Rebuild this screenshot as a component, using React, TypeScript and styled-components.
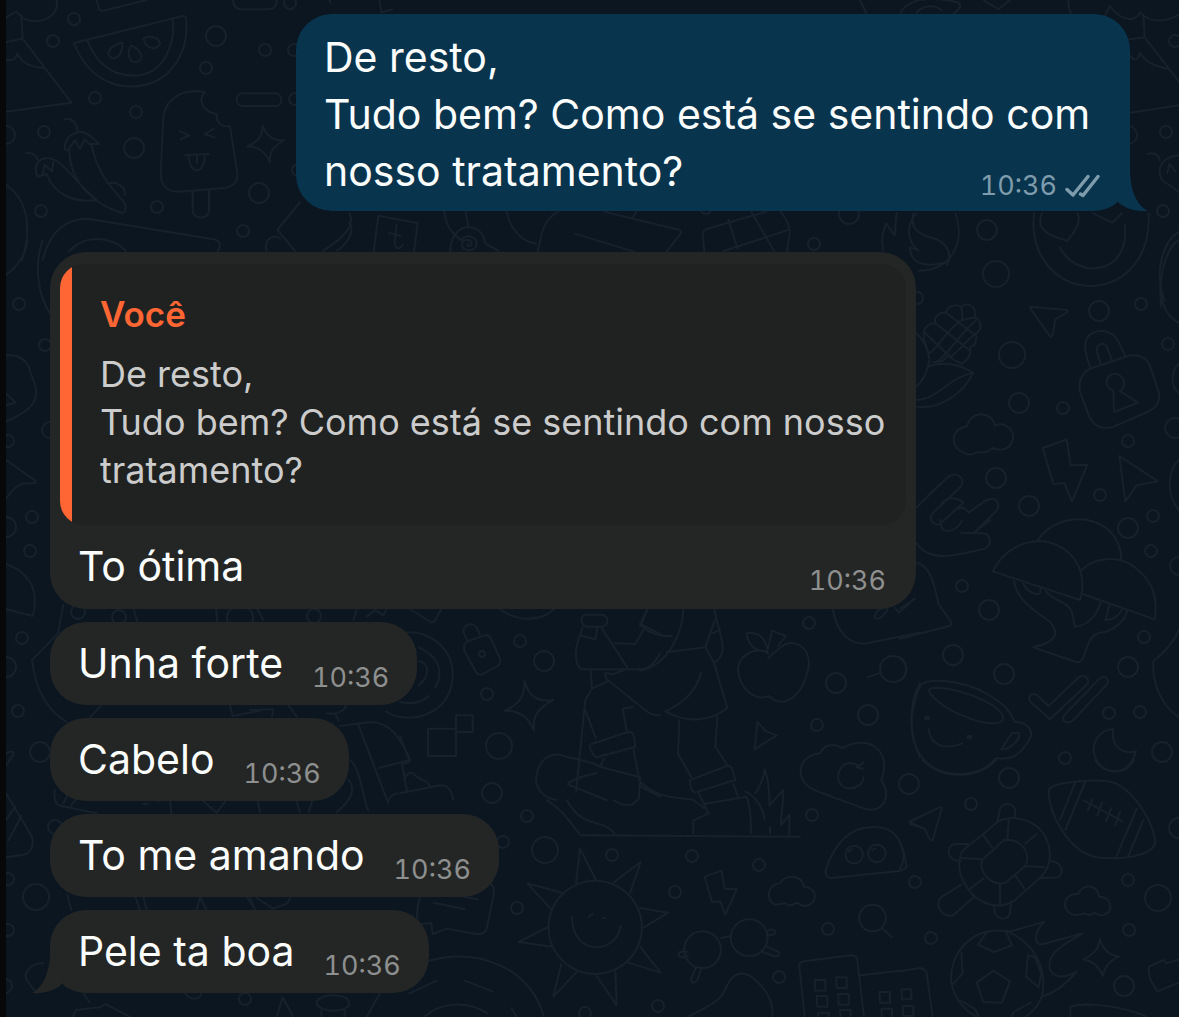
import React from "react";
import styled, { createGlobalStyle } from "styled-components";

const color = {
  night: "#0b1621",
  doodle: "#16212c",
  edge: "#080808",
  sent: "#09344d",
  received: "#242625",
  quote: "#202221",
  accent: "#ff6633",
  text: "#fbfdfd",
  quoteText: "#cbcccb",
};

const GlobalStyle = createGlobalStyle`
  body {
    margin: 0;
    background: ${color.night};
    font-family: Inter, "Liberation Sans", sans-serif;
    color: ${color.text};
  }
`;

const Chat = styled.main`
  position: relative;
  box-sizing: border-box;
  min-height: 100vh;
  overflow: hidden;
  padding: 14px 49px 24px 44px;
  border-left: 6px solid ${color.edge};
  background: ${color.night};
`;

const Wallpaper = styled.svg`
  position: absolute;
  top: 0;
  left: -6px;
  fill: none;
  stroke: ${color.doodle};
  stroke-width: 2px;
  stroke-linecap: round;
  stroke-linejoin: round;

  path {
    vector-effect: non-scaling-stroke;
  }
`;

const Thread = styled.ol`
  position: relative;
  display: flex;
  flex-direction: column;
  gap: 13px;
  margin: 0;
  padding: 0;
  list-style: none;
`;

const Bubble = styled.li<{ $sent?: boolean; $wide?: boolean }>`
  position: relative;
  box-sizing: border-box;
  align-self: ${(p) => (p.$sent ? "flex-end" : "flex-start")};
  width: ${(p) => (p.$sent ? "834px" : p.$wide ? "866px" : "auto")};
  max-width: 100%;
  margin-bottom: ${(p) => (p.$sent ? "28px" : "0")};
  padding: ${(p) => (p.$sent ? "15px 30px 11px 28px" : p.$wide ? "12px 10px 14px" : "13px 28px")};
  border-radius: 36px;
  background: ${(p) => (p.$sent ? color.sent : color.received)};
`;

const Tail = styled.svg<{ $sent?: boolean }>`
  position: absolute;
  bottom: 0;
  ${(p) => (p.$sent ? "right: -18px;" : "left: -18px; transform: scaleX(-1);")}
  fill: ${(p) => (p.$sent ? color.sent : color.received)};
`;

const Line = styled.div<{ $inset?: boolean }>`
  display: flex;
  justify-content: space-between;
  align-items: flex-end;
  gap: 29px;
  padding: ${(p) => (p.$inset ? "0 20px 0 18px" : "0")};
`;

const Text = styled.p`
  margin: 0;
  font-size: 41px;
  line-height: 57px;
  white-space: pre-line;
`;

const Meta = styled.span<{ $sent?: boolean }>`
  display: flex;
  align-items: center;
  gap: 8px;
  font-size: 27px;
  font-variant-numeric: tabular-nums;
  line-height: 28px;
  color: ${(p) => (p.$sent ? "#7f9cac" : "#8e908f")};
`;

const QuoteFrame = styled.div`
  margin-bottom: 13px;
  border-radius: 24px;
  overflow: hidden;
`;

const Quote = styled.blockquote`
  margin: 0;
  padding: 26px 20px 31px 28px;
  border-left: 12px solid ${color.accent};
  background: ${color.quote};
`;

const Author = styled.cite`
  display: block;
  margin-bottom: 12px;
  font-size: 35px;
  font-style: normal;
  font-weight: 600;
  line-height: 48px;
  color: ${color.accent};
`;

const QuoteText = styled.p`
  margin: 0;
  font-size: 36px;
  line-height: 48px;
  color: ${color.quoteText};
  white-space: pre-line;
`;

function BubbleTail({ sent }: { sent?: boolean }) {
  return (
    <Tail $sent={sent} width="34" height="60" viewBox="0 0 34 60" aria-hidden="true">
      <path d="M0 14H16V18C16 38 22 54 34 60C21 61 11 57 5 52L0 40Z" />
    </Tail>
  );
}

function DoubleCheck() {
  return (
    <svg width="35" height="24" viewBox="0 0 35 24" fill="none" stroke="currentColor" strokeWidth="3.400" strokeLinecap="round" role="img" aria-label="Entregue">
      <path d="M2 15.500L8 21L23 2.500" strokeLinejoin="round" />
      <path d="M15.500 20L18 21.500L33 2.500" strokeLinejoin="round" />
    </svg>
  );
}

const dots: [number, number, number][] = [
  [74, 19, 6], [53, 41, 6], [206, 68, 6], [95, 98, 6], [136, 112, 6], [44, 132, 6], [41, 211, 6], [157, 207, 6],
  [243, 231, 6], [265, 50, 6], [290, 3, 6], [216, 36, 10], [134, 148, 10], [259, 193, 10], [6, 135, 9], [294, 50, 6],
  [295, 99, 6], [298, 170, 6], [1175, 41, 6], [1166, 132, 6], [1163, 211, 6], [987, 230, 10], [996, 274, 13],
  [1128, 135, 9], [1099, 311, 10], [1141, 304, 6], [1168, 344, 6], [1012, 355, 13], [1019, 403, 10], [1063, 408, 6],
  [1175, 428, 10], [1128, 441, 6], [996, 478, 10], [1029, 506, 10], [1100, 495, 6], [1153, 516, 6], [1128, 528, 10],
  [917, 298, 6], [1151, 551, 6], [962, 586, 6], [989, 610, 10], [953, 655, 10], [1004, 674, 10], [1144, 637, 6],
  [1128, 667, 10], [1109, 713, 6], [1140, 712, 6], [1065, 758, 6], [1162, 752, 10], [1009, 778, 10], [1179, 566, 9],
  [893, 669, 13], [909, 784, 10], [971, 804, 6], [915, 882, 6], [931, 938, 6], [1128, 880, 6], [1158, 898, 13],
  [1129, 930, 6], [1124, 986, 10], [1179, 828, 10], [520, 641, 6], [544, 661, 10], [487, 694, 6], [499, 746, 13],
  [492, 793, 10], [809, 623, 6], [836, 683, 10], [868, 715, 10], [817, 725, 6], [812, 815, 6], [527, 816, 6],
  [503, 842, 6], [545, 850, 13], [612, 855, 6], [692, 856, 6], [675, 892, 6], [517, 908, 6], [759, 865, 6],
  [828, 929, 6], [779, 977, 6], [658, 1006, 6], [585, 1013, 6], [19, 304, 6], [45, 345, 6], [8, 441, 6],
  [32, 517, 6], [6, 527, 10], [30, 551, 6], [50, 430, 8], [78, 612, 7], [119, 617, 7], [22, 638, 6], [6, 667, 10],
  [18, 711, 6], [40, 752, 10], [8, 879, 6], [36, 897, 13], [8, 930, 6], [5, 986, 7], [245, 999, 6], [55, 827, 7],
  [482, 654, 3], [314, 616, 7], [240, 618, 13], [814, 244, 6], [849, 214, 10], [706, 208, 6],
];

// Each cluster is drawn on a grid three times finer than the page.
const clusters: { x: number; y: number; paths: string[] }[] = [
  {
    x: 0,
    y: 0,
    paths: [
      // watermelon slice and tray
      "M222 129L548 48Q557 46 558 56C568 150 520 232 438 254C340 276 262 230 222 129Z",
      "M262 121C290 192 340 232 416 226C488 218 526 140 519 58",
      "M368 128C352 128 320 148 326 164C336 186 366 176 368 128Z M394 136C380 158 386 186 406 186C434 184 430 154 394 136Z M430 116C448 104 478 112 480 130C474 152 440 150 430 116Z",
      "M290 0L296 24Q300 36 316 31L440 0",
      "M700 0C698 16 708 28 724 28H806C822 28 832 14 830 0 M988 0L992 8 M1138 0L1144 38L1176 28",
      // pizza slice
      "M0 62L50 34Q70 66 110 64C160 56 174 30 170 0 M64 46L68 116L214 308L0 338 M0 130L68 116 M0 164C20 190 50 182 52 160C66 192 100 202 132 204",
      // ice lolly
      "M490 350C500 290 550 266 614 276C592 304 610 336 650 342C648 366 664 384 690 378L712 520C714 548 700 560 670 564L540 575C500 576 482 556 482 520Z",
      "M578 575V632C580 660 626 660 627 630V570",
      "M540 394L568 406L542 418 M642 386L614 402L644 412 M556 465L626 462 M566 466C568 528 614 526 614 464 M591 464V490",
      "M728 280H826C850 282 850 318 826 318H728C704 316 704 282 728 280Z",
      "M788 376C800 410 820 424 852 420C820 440 806 456 810 486C796 456 776 438 742 440C776 424 788 408 788 376Z",
      // chillies
      "M192 358C214 350 234 370 232 398 M194 448C192 402 240 384 268 406L298 432L274 432C290 520 340 570 372 606C382 620 376 642 364 638C300 620 210 560 208 452L194 448Z M208 446L224 420L240 446L254 418L270 434",
      "M78 460C98 456 108 466 114 480 M112 530C96 490 126 464 160 478C196 492 230 550 290 600C220 610 160 580 140 522L112 530Z M128 520L134 494L156 514L160 486 M322 550C350 544 380 560 374 586",
      "M0 545C70 576 104 660 66 780",
      "M128 780C150 690 200 656 264 656L640 718C664 722 662 736 654 752 M206 756C250 704 330 706 378 752",
      "M900 606L832 690L884 752 M800 752C790 716 824 700 840 716 M1048 640C1070 680 1020 720 970 752 M1048 668C1070 700 1030 740 1010 752",
    ],
  },
  {
    x: 860,
    y: 0,
    paths: [
      "M0 0L20 42 M120 42C140 0 200 -16 296 8Q310 20 280 42 M170 42C176 20 220 10 244 30 M370 0L416 28L450 0",
      "M625 0C624 20 630 42 640 46 M735 46L750 18C780 60 820 70 840 38C870 70 920 66 957 44 M850 44L854 112L957 246 M808 118L854 112 M810 166C826 190 838 172 840 158C860 192 890 198 920 206 M810 338L957 316",
      "M864 462C880 456 896 464 900 480 M957 466C910 468 886 504 906 540L957 576 M922 520L928 492L946 514",
      "M957 696C910 720 880 820 914 900",
      // yin-yang and smiling face
      "M70 752C58 700 80 672 78 670L104 706C108 680 106 660 110 640 M170 640C140 670 136 720 176 752L150 742C148 790 200 804 252 788 M160 640C150 680 170 700 210 712C260 724 280 760 260 794 M286 640C316 720 280 812 176 812",
      "M522 640C508 772 592 860 700 858C800 850 872 770 866 640 M600 742C650 842 812 826 794 676 M546 640C528 680 550 704 622 722C650 690 664 660 652 640 M700 640L756 668L786 640",
    ],
  },
  {
    x: 900,
    y: 240,
    paths: [
      // corn cob
      "M50 280C80 310 92 350 86 372C76 410 66 424 50 440 M50 480C110 480 150 410 220 398C190 460 120 510 50 500 M86 380C120 364 170 370 216 396",
      "M86 344C80 320 66 292 72 276C76 254 96 248 106 250C100 230 120 214 138 218C142 198 166 190 184 200C204 184 232 200 224 232C246 240 246 270 228 280C232 306 222 322 210 320C216 350 196 364 184 374",
      "M72 276L150 350Q176 372 190 368 M106 250L208 330 M138 218L226 286 M184 200L188 240L224 232 M86 340C110 332 130 280 184 240 M110 364C140 350 180 280 228 240 M150 352C170 340 190 310 228 280 M100 366L126 364L148 344",
      "M390 200L500 210Q506 214 500 218L466 238L458 286Q452 294 448 286L390 204Z",
      // padlock
      "M572 384C540 310 556 274 606 272C654 278 656 310 676 348 M602 372L590 334C588 308 620 302 624 328L636 362",
      "M576 384L690 346C720 344 744 356 752 384L776 456C782 484 768 504 742 516L636 562C604 568 580 558 568 530L540 456C534 418 546 396 576 384Z M640 452C604 440 620 396 650 402C680 412 676 448 658 452L714 488L642 516Z",
      // cloud, bolt, pointer
      "M190 638C150 622 148 570 202 558C212 510 276 512 284 556C320 542 350 580 336 606C326 630 300 634 276 624C266 640 244 638 230 636Q210 650 190 638Z",
      "M428 624L500 598L512 676L562 674L516 784L494 730L460 732Z M658 648L774 724L710 736L676 784Z",
      // hand
      "M50 802L140 714C168 690 200 714 182 740L98 820C80 846 112 860 122 850L190 788C170 770 140 770 124 792 M186 842C170 874 126 888 122 850L170 806C186 798 200 808 206 818L256 782C286 766 304 790 290 812L222 878",
      "M784 200C772 110 800 20 837 0 M784 160C788 210 810 232 837 250 M837 370C810 400 812 440 837 460 M837 660C800 690 800 770 837 810",
    ],
  },
  {
    x: 900,
    y: 520,
    paths: [
      "M50 70C76 110 130 114 180 102L256 86C280 70 270 40 246 40L184 38 M120 0L128 30 M270 0L222 38 M50 128C90 140 100 180 116 252L152 304Q158 312 148 318L0 356 M0 266L44 236",
      // umbrellas
      "M278 154C310 90 370 60 430 64C516 78 566 150 540 240L278 154Z M412 62C480 -40 660 -20 664 118 M544 152C580 110 660 104 710 146C760 186 774 240 764 298L548 222",
      "M342 182C350 248 420 280 452 308C484 350 456 368 400 382L528 426Q544 430 552 408C568 360 572 340 614 336C650 326 676 298 682 272 M370 190C380 216 410 226 420 220L422 202 M436 212C462 246 500 240 516 276L524 320C564 318 590 286 602 248 M628 256L616 300C640 302 660 284 668 266",
      // smiling cup
      "M66 492C90 474 190 480 262 522C320 556 334 580 344 606C376 606 400 626 392 652C360 710 330 722 288 714C250 760 190 770 130 756C54 730 30 660 36 590C42 550 50 506 66 492Z",
      "M90 506C130 490 290 540 308 588C320 620 250 614 196 590C140 570 74 520 90 506Z M336 638L358 640C360 660 330 690 304 688Z M86 628C92 680 140 690 186 670",
      "M76 590h10v7h-10Z M203 648h11v7h-11Z",
      "M392 546C380 526 400 514 416 530L446 558L536 472C556 460 572 480 560 494L450 598Z M492 586L596 478C614 462 634 478 618 496L520 600C500 616 484 604 492 586Z",
      "M640 628C632 670 660 706 708 694C690 760 630 770 596 730C560 680 596 626 640 628Z",
      "M837 330C820 370 790 400 760 424C756 500 790 560 837 592",
      "M0 412C26 430 26 466 0 482",
    ],
  },
  {
    x: 900,
    y: 760,
    paths: [
      "M68 0C120 56 230 62 288 0 M586 0C610 44 680 48 702 0",
      // rugby ball
      "M450 84C470 66 600 52 648 70C712 104 760 190 766 246C760 290 660 300 590 292C510 276 450 170 446 100Q446 88 450 84Z",
      "M526 66L480 180 M556 64L496 210 M710 146L650 288 M730 180L686 286 M552 122L668 184 M578 116L564 150 M606 128L592 166 M634 144L618 184 M660 156L646 196",
      "M28 186L118 142Q126 140 124 150L98 240Q92 244 88 236L74 206L30 192Z",
      // turtle
      "M292 186C340 160 410 180 436 230C460 280 450 320 424 350L340 424C290 452 230 430 200 380C170 340 174 290 190 270L250 222Z",
      "M312 240C360 232 396 280 376 318L316 368C276 380 236 340 246 300Z M326 180L322 240 M410 222L376 250 M250 226L276 262 M184 294L246 298 M434 322L376 318 M372 384L346 346 M300 434V374 M210 386L250 356",
      "M292 186L300 146C312 124 348 128 346 160L344 172 M204 252H164C138 258 136 300 182 304 M446 304C480 302 496 330 476 352L424 354 M284 436C276 480 324 486 330 460L334 424 M184 374L126 410C100 430 124 474 160 466L222 410",
      "M510 460C482 440 494 400 534 402C552 366 592 376 598 410C640 410 644 466 600 466L582 458Q570 470 554 460Q530 470 510 460Z",
      // flaming football
      "M238 522C160 560 130 650 174 720C190 744 210 760 230 771 M324 514C290 508 262 512 238 522 M330 518C400 550 440 620 428 700C420 730 400 756 376 771",
      "M324 516L432 486C400 520 400 560 430 552L548 520C480 560 440 580 450 630C470 660 500 650 530 636C500 670 460 700 426 710",
      "M260 518L234 554L282 576L336 556L318 516 M280 632L330 664L306 728L250 726L230 668Z M384 586L404 590L424 640L416 682L378 650Z M184 578L188 640L160 672 M180 720L226 748L236 771 M332 771L344 754L392 728",
      "M600 538C610 570 626 584 658 590C630 600 614 620 608 648C598 620 582 604 550 598C580 584 594 570 600 538Z",
      "M748 620L790 600L800 610L837 598 M748 620Q740 650 772 694L837 668 M510 771L512 740C560 724 680 740 740 771",
      "M0 634L60 624Q76 626 80 640L98 771 M4 688H34V718H6Z M8 738H40V768H10Z M0 250C14 280 14 300 0 326",
    ],
  },
  {
    x: 400,
    y: 600,
    paths: [
      "M24 24L92 66Q98 70 104 62L124 28 M296 24C350 70 430 64 464 24",
      // vinyl record
      "M10 98C80 88 160 140 158 226C156 310 90 360 10 352C-10 350 -30 344 -42 334 M56 142C110 166 136 210 106 262 M0 306C40 314 70 304 86 288 M56 184C90 186 90 230 56 256",
      "M204 124L190 96C190 68 226 66 232 88L240 104 M202 124L254 106Q266 104 272 114L300 176Q304 190 292 198L246 224Q234 226 228 216L192 150Q190 132 202 124Z",
      "M374 242C386 290 410 306 460 300C416 324 396 346 402 392C384 350 360 332 314 332C356 314 374 292 374 242Z",
      "M84 386H168V468H84Z M168 346H218V396H168Z",
      "M0 408L30 486L6 492 M6 492L20 570 M12 540C16 520 36 516 40 520C60 546 80 536 88 556 M0 580L120 556C150 556 156 580 160 600",
      // walking figure
      "M556 44H606C628 48 628 78 604 80H560C540 76 540 48 556 44Z M548 82L540 106L586 118L592 84 M540 106C526 140 520 190 544 208H720C750 206 770 180 780 160 M606 86L684 206L640 222L614 220L620 238L740 334Q760 350 780 344",
      "M646 130L706 132L732 86 M740 30L722 72L780 102 M572 212L576 266L556 300 M556 300L528 576 M576 266L622 244 M556 330L588 416 M700 320L668 326L680 392",
      "M574 432L684 396Q700 394 702 412L706 440L590 472Q578 470 568 436 M612 476L600 500L720 532L716 600 M700 446L722 560L780 590 M590 520C540 528 500 548 504 554L620 600 M600 500C570 480 520 480 480 464C430 460 408 500 408 550C420 580 440 596 470 600",
    ],
  },
  {
    x: 640,
    y: 600,
    paths: [
      "M0 80L24 24 M130 24C130 100 80 200 0 212 M0 70C20 100 60 108 96 108 M80 156L196 142 M222 24L230 60C250 130 260 170 222 188L196 142L224 60 M216 100L240 90 M222 188L262 324C210 366 140 370 76 334C130 310 170 270 184 216",
      "M118 360L114 462L154 530 M232 350L226 440L264 498 M156 538L260 498Q276 496 278 512L286 540L164 578Q150 572 150 540 M176 580L192 612L320 590Q336 640 332 700 M280 552L294 590 M192 612L206 640L160 662V700 M0 546C60 600 110 590 160 600L192 624 M-176 706L480 710",
      "M316 574C350 590 366 620 374 656 M346 580C360 560 370 540 374 508C390 550 388 600 388 616L430 570C430 620 420 660 424 674L448 644V706 M390 680V700",
      // apple
      "M384 160C350 140 300 160 294 206C296 260 340 306 386 288C430 330 490 290 506 200C512 140 460 112 424 140L384 174 M320 100C360 94 380 120 382 154C340 154 326 136 320 100Z M382 154L396 92L438 108L414 138",
      "M578 24C590 100 630 136 680 130L840 98 M704 52C700 30 750 10 740 32C730 50 710 64 704 52Z M766 24L776 38L810 10 M682 232L722 218",
      "M352 366L378 394L410 406L344 448Z",
      "M540 460C490 466 476 500 484 530C500 570 540 576 580 592L680 628C730 636 756 590 724 542C750 470 710 410 630 434L606 444C580 426 550 436 540 460Z M654 496C600 464 570 550 620 564C650 568 670 552 670 532 M670 488L650 502L668 506",
      "M840 250C806 310 806 410 840 470 M840 650L808 666L840 680",
    ],
  },
  {
    x: 400,
    y: 800,
    paths: [
      "M440 0C500 40 510 70 540 104 M500 0C550 90 600 50 644 100 M640 0C670 20 700 20 710 0",
      // sun
      "M586 242A140 140 0 1 1 585 242Z M528 248L540 146L588 240 M640 248L722 186L690 280 M720 324L804 338L732 382 M720 440L782 518L684 488 M646 516L650 616L590 528 M530 516L460 590L484 492 M456 440L356 426L442 382 M452 326L382 250L490 280 M516 350C516 470 650 464 662 378 M566 350L578 342 M608 354h6",
      "M60 290C50 330 46 360 60 372L94 370L98 402L140 386L230 402Q254 404 260 386L282 280Q284 260 270 250 M102 308L194 328 M190 290L234 298",
      "M80 484C230 440 390 500 432 651 M28 580L110 542 M194 542L276 574 M72 651C130 600 210 606 262 640 M334 624L350 651",
      "M914 230L964 212L974 266L1010 268L976 344L960 304L936 306Z",
      "M1126 314C1094 302 1102 252 1140 250C1154 222 1204 222 1212 260C1258 262 1254 320 1210 318L1190 308Q1170 322 1156 310Z",
      // spectacles
      "M908 394A55 55 0 1 1 907 394Z M1048 358A55 55 0 1 1 1047 358Z M962 414L992 408 M860 456C830 450 828 472 850 472L864 466 M888 502L872 540Q880 556 892 540L904 504 M1100 394C1120 380 1134 398 1120 404L1106 406 M1102 440L1136 456Q1140 472 1120 468L1090 456",
      "M1418 314A40 40 0 1 1 1417 314Z M1448 386L1476 412",
      // ghost
      "M1276 212C1310 110 1370 70 1450 84C1490 94 1510 130 1520 200Q1510 212 1490 214L1294 234Q1276 232 1276 212Z M1363 138A26 26 0 1 1 1362 138Z M1431 134A26 26 0 1 1 1430 134Z M1346 154L1356 148 M1416 150L1426 146",
      "M864 651C940 610 960 606 980 560C1000 510 1040 510 1070 544C1110 580 1122 620 1116 651",
      // towers
      "M1214 651L1198 500Q1196 486 1212 484L1354 466Q1370 466 1372 480L1392 651 M1382 526L1500 512 M1244 540H1276V572H1246Z M1308 532H1340V564H1310Z M1250 588H1282V620H1252Z M1314 582H1346V614H1316Z M1254 638H1286V660H1256Z M1320 630H1352V660H1322Z M1438 576H1470V608H1440Z M1444 626H1476V658H1446Z",
    ],
  },
  {
    x: 0,
    y: 240,
    paths: [
      "M82 0C80 40 50 84 18 104 M128 0C100 80 116 170 150 220 M18 346C60 342 86 364 92 400C120 460 124 500 18 544 M18 460L46 488L18 496 M18 660L106 722Q110 730 96 730C60 728 50 734 18 776 M18 972C50 984 74 1000 84 1020",
    ],
  },
  {
    x: 0,
    y: 580,
    paths: [
      "M86 0C108 30 108 80 98 108L18 88 M190 74L174 160L96 240C106 330 140 390 200 426 M304 376L270 412 M18 520Q44 508 40 524L18 556 M18 640L96 770C104 800 90 820 70 824L18 832 M18 720L46 680 M26 780L64 708 M164 630C162 660 166 674 184 678L290 700 M190 670L206 640 M214 676L240 640 M400 84L412 126 M648 84L652 126 M690 376L698 408L780 392",
      "M202 946L214 990 M406 950L420 990 M430 950L440 990 M590 990L600 952L620 990 M740 950L766 990 M130 1150C90 1150 70 1180 80 1200L110 1240 M218 1311L228 1290L300 1282L316 1272L390 1311 M250 1240L268 1266 M556 1240C570 1262 600 1260 604 1240 M430 672h12 M470 662h14 M510 662L514 700 M610 664L650 698L676 664",
    ],
  },
  {
    x: 250,
    y: 600,
    paths: [
      "M0 330L70 328L66 350 M116 316L140 350 M232 340C260 344 280 334 288 318 M256 342L266 362 M270 378L360 366C420 366 450 410 480 480L386 504 M326 376L414 608 M300 480C330 500 340 600 354 630 M296 540C320 570 300 604 260 636 M140 606L150 636 M186 606L176 636 M24 606L30 636 M414 608C416 590 424 586 440 580",
      "M0 894L14 928 M20 894L70 926L112 910L120 894 M310 60L320 30 M350 50L376 30L400 46L410 26 M20 24L40 60",
      "M80 1251L98 1192L130 1251 M200 1210C200 1180 296 1176 298 1210C296 1240 210 1240 200 1210 M214 1232V1251 M284 1230V1251 M350 1251L390 1180",
    ],
  },
  {
    x: 200,
    y: 205,
    paths: [
      // playing card
      "M521 140L535 32L653 54L642 140 M590 58L584 112C586 134 600 134 608 120 M566 84L602 92",
      // snail
      "M733 20C738 60 750 80 784 106 M797 20L804 60 M751 140C750 96 776 66 806 66C838 68 852 90 856 116L896 138 M784 106C800 84 830 96 830 116C828 140 788 144 786 118C790 98 820 104 814 118C808 130 798 120 804 114",
      "M920 20C930 70 960 108 1008 116 M1075 20C1022 48 1024 100 1013 140 M1213 20L1436 74Q1448 78 1440 88L1400 140 M1124 86L1302 140 M1309 20L1298 38",
      // chocolate bar
      "M1513 140L1508 86Q1508 76 1520 72L1698 20 M1742 20Q1772 60 1769 84L1761 140 M1571 138L1767 74 M1585 44L1612 130 M1654 20L1722 138",
    ],
  },
];

function Doodles() {
  return (
    <Wallpaper width="1179" height="1017" viewBox="0 0 1179 1017" aria-hidden="true">
      {dots.map(([cx, cy, r]) => (
        <circle key={`${cx}-${cy}`} cx={cx} cy={cy} r={r} />
      ))}
      {clusters.map((c) => (
        <g key={`${c.x}-${c.y}`} transform={`translate(${c.x} ${c.y}) scale(${1 / 3})`}>
          {c.paths.map((d) => (
            <path key={d} d={d} />
          ))}
        </g>
      ))}
    </Wallpaper>
  );
}

const opening = "De resto,\nTudo bem? Como está se sentindo com";
const ending = "nosso tratamento?";
const replies = ["Unha forte", "Cabelo", "To me amando", "Pele ta boa"];

export default function App() {
  return (
    <>
      <GlobalStyle />
      <Chat>
        <Doodles />
        <Thread>
          <Bubble $sent>
            <BubbleTail sent />
            <Text>{opening}</Text>
            <Line>
              <Text>{ending}</Text>
              <Meta $sent>
                <time>10:36</time>
                <DoubleCheck />
              </Meta>
            </Line>
          </Bubble>
          <Bubble $wide>
            <QuoteFrame>
              <Quote>
                <Author>Você</Author>
                <QuoteText>{`${opening} ${ending}`}</QuoteText>
              </Quote>
            </QuoteFrame>
            <Line $inset>
              <Text>To ótima</Text>
              <Meta>
                <time>10:36</time>
              </Meta>
            </Line>
          </Bubble>
          {replies.map((reply, i) => (
            <Bubble key={reply}>
              {i === replies.length - 1 && <BubbleTail />}
              <Line>
                <Text>{reply}</Text>
                <Meta>
                  <time>10:36</time>
                </Meta>
              </Line>
            </Bubble>
          ))}
        </Thread>
      </Chat>
    </>
  );
}
